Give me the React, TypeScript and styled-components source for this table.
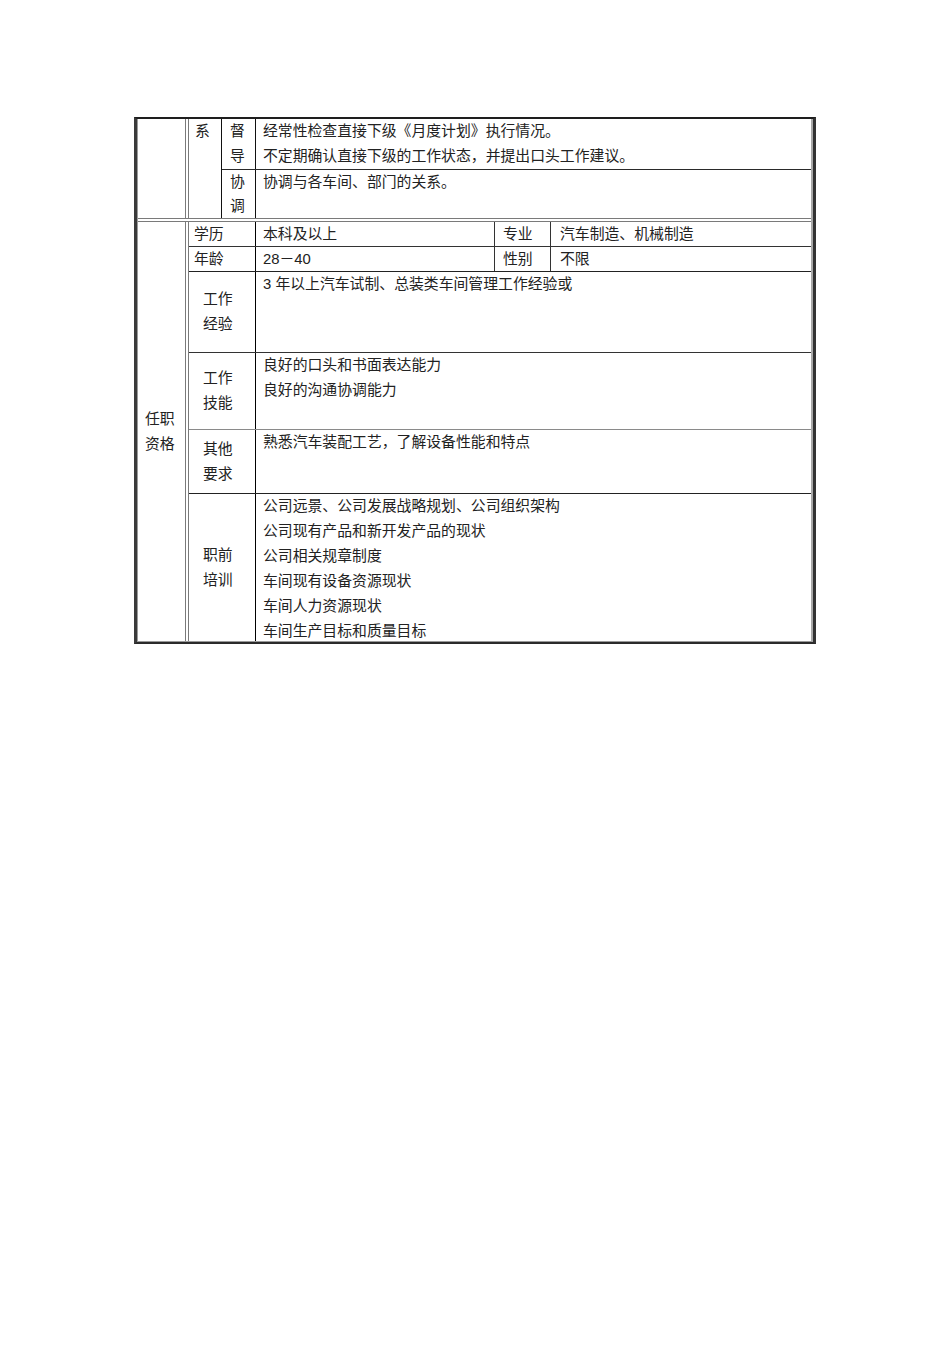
import React from "react";
import styled, { createGlobalStyle } from "styled-components";

const Global = createGlobalStyle`
  html, body { margin: 0; padding: 0; background: #ffffff; }
  body {
    font-family: "Liberation Sans", "Noto Sans CJK SC", sans-serif;
    font-size: 14.85px;
    color: #222;
  }
`;

const Page = styled.div`
  padding: 117px 0 0 134px;
  min-height: 1228px;
  background: #fff;
`;

const Frame = styled.div`
  box-sizing: border-box;
  width: 682px;
  border-top: 2px solid #1e1e1e;
  border-left: 3px solid #3a3a3a;
  border-right: 3px solid #333;
  border-bottom: 2px solid #2a2a2a;
`;

const Body = styled.div`
  border-left: 1px solid #9a9a9a;
  border-right: 2px solid #a8a8a8;
  border-bottom: 1px solid #999;
  display: flex;
  flex-direction: column;
`;

const Section = styled.div<{ $divider?: boolean }>`
  display: flex;
  border-top: ${(p) => (p.$divider ? "4px double #7a7a7a" : "none")};
`;

const SideCell = styled.div`
  box-sizing: border-box;
  width: 51px;
  flex: none;
  border-right: 4px double #7a7a7a;
  padding-left: 7px;
  display: flex;
  align-items: center;
  line-height: 25px;
`;

const GroupCell = styled.div`
  box-sizing: border-box;
  width: 33px;
  flex: none;
  border-right: 1px solid #111;
  padding-left: 6px;
  line-height: 25px;
`;

const Stack = styled.div`
  flex: 1;
  display: flex;
  flex-direction: column;
`;

const Row = styled.div<{ $h: number; $rule?: string }>`
  box-sizing: border-box;
  display: flex;
  height: ${(p) => p.$h}px;
  border-top: ${(p) => (p.$rule ? `1px solid ${p.$rule}` : "none")};
`;

const Label = styled.div<{ $w: number; $pad: number; $middle?: boolean; $lh?: number; $rule?: string }>`
  box-sizing: border-box;
  width: ${(p) => p.$w}px;
  flex: none;
  border-right: 1px solid ${(p) => p.$rule ?? "#111"};
  padding-left: ${(p) => p.$pad}px;
  line-height: ${(p) => p.$lh ?? 25}px;
  display: flex;
  flex-direction: column;
  justify-content: ${(p) => (p.$middle ? "center" : "flex-start")};
  white-space: nowrap;
`;

const Text = styled.div<{ $lh?: number; $pad?: number }>`
  flex: 1;
  padding-left: ${(p) => p.$pad ?? 7}px;
  line-height: ${(p) => p.$lh ?? 25}px;
  white-space: nowrap;
`;

const Line = styled.div``;

const training = [
  "公司远景、公司发展战略规划、公司组织架构",
  "公司现有产品和新开发产品的现状",
  "公司相关规章制度",
  "车间现有设备资源现状",
  "车间人力资源现状",
  "车间生产目标和质量目标",
];

export default function App() {
  return (
    <Page>
      <Global />
      <Frame>
        <Body>
          <Section>
            <SideCell />
            <GroupCell>系</GroupCell>
            <Stack>
              <Row $h={50}>
                <Label $w={34} $pad={8}>
                  <Line>督</Line>
                  <Line>导</Line>
                </Label>
                <Text>
                  <Line>经常性检查直接下级《月度计划》执行情况。</Line>
                  <Line>不定期确认直接下级的工作状态，并提出口头工作建议。</Line>
                </Text>
              </Row>
              <Row $h={49} $rule="#2a2a2a">
                <Label $w={34} $pad={8} $lh={24}>
                  <Line>协</Line>
                  <Line>调</Line>
                </Label>
                <Text $lh={24}>协调与各车间、部门的关系。</Text>
              </Row>
            </Stack>
          </Section>
          <Section $divider>
            <SideCell>
              <div>
                <Line>任职</Line>
                <Line>资格</Line>
              </div>
            </SideCell>
            <Stack>
              <Row $h={24}>
                <Label $w={67} $pad={5} $lh={24} $rule="#000">学历</Label>
                <Label $w={239} $pad={7} $lh={24} $rule="#333">本科及以上</Label>
                <Label $w={56} $pad={8} $lh={24} $rule="#333">专业</Label>
                <Text $lh={24} $pad={9}>汽车制造、机械制造</Text>
              </Row>
              <Row $h={25} $rule="#333">
                <Label $w={67} $pad={5} $lh={24} $rule="#000">年龄</Label>
                <Label $w={239} $pad={7} $lh={24} $rule="#333">28－40</Label>
                <Label $w={56} $pad={8} $lh={24} $rule="#333">性别</Label>
                <Text $lh={24} $pad={9}>不限</Text>
              </Row>
              <Row $h={81} $rule="#222">
                <Label $w={67} $pad={14} $middle $rule="#000">
                  <Line>工作</Line>
                  <Line>经验</Line>
                </Label>
                <Text>3 年以上汽车试制、总装类车间管理工作经验或</Text>
              </Row>
              <Row $h={77} $rule="#333">
                <Label $w={67} $pad={14} $middle $rule="#000">
                  <Line>工作</Line>
                  <Line>技能</Line>
                </Label>
                <Text>
                  <Line>良好的口头和书面表达能力</Line>
                  <Line>良好的沟通协调能力</Line>
                </Text>
              </Row>
              <Row $h={64} $rule="#8a8a8a">
                <Label $w={67} $pad={14} $middle $rule="#000">
                  <Line>其他</Line>
                  <Line>要求</Line>
                </Label>
                <Text>熟悉汽车装配工艺，了解设备性能和特点</Text>
              </Row>
              <Row $h={148} $rule="#222">
                <Label $w={67} $pad={14} $middle $rule="#000">
                  <Line>职前</Line>
                  <Line>培训</Line>
                </Label>
                <Text>
                  {training.map((t) => (
                    <Line key={t}>{t}</Line>
                  ))}
                </Text>
              </Row>
            </Stack>
          </Section>
        </Body>
      </Frame>
    </Page>
  );
}
